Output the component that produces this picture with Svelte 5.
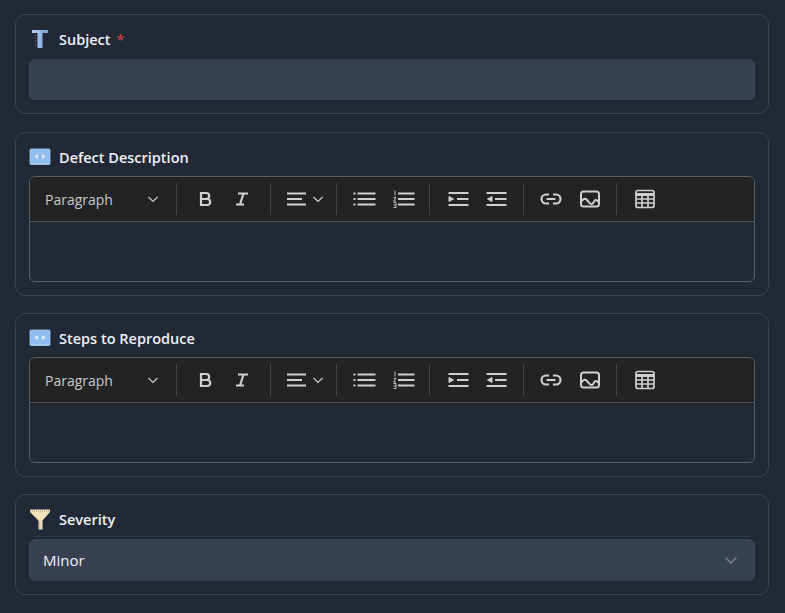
<script>
  const editors = ['Defect Description', 'Steps to Reproduce'];
</script>

{#snippet chev(w, cls)}
  <svg class={cls} width={w} height={w} viewBox="0 0 12 12" fill="none" stroke="currentColor" stroke-width="1.2"><path d="M1.5 4 6 8.5 10.5 4"/></svg>
{/snippet}

{#snippet toolbar()}
  <div class="toolbar">
    <div class="para"><span>Paragraph</span>{@render chev(12, 'pchev')}</div>
    <i class="sep"></i>
    <div class="grp g1">
      <svg width="20" height="20" viewBox="0 0 20 20" fill="none" stroke="#d0d0d0" stroke-width="2.200"><path d="M6 4h5.200a3 3 0 0 1 0 6H6zM6 10h6.200a3 3 0 0 1 0 6H6zM6 3v14"/></svg>
      <svg width="20" height="20" viewBox="0 0 20 20" fill="none" stroke="#d0d0d0" stroke-width="2.200"><path d="M6 4.500h10M4 15.500h8M11.500 4.500 8 15.500"/></svg>
    </div>
    <i class="sep"></i>
    <div class="grp g2">
      <svg width="20" height="20" viewBox="0 0 20 20" fill="none" stroke="#d0d0d0" stroke-width="2"><path d="M0 4.500h19M0 10h15M0 15.500h19"/></svg>
      {@render chev(12, 'achev')}
    </div>
    <i class="sep"></i>
    <div class="grp g3">
      <svg width="24" height="20" viewBox="0 0 24 20" fill="none" stroke="#d0d0d0" stroke-width="2"><path d="M4.500 4.500h18M4.500 10h18M4.500 15.500h18"/><path d="M.5 4.500h2M.5 10h2M.5 15.500h2"/></svg>
      <svg width="24" height="20" viewBox="0 0 24 20" fill="none" stroke="#d0d0d0" stroke-width="2"><path d="M6 4.500h16.500M6 10h16.500M6 15.500h16.500"/><path d="M3 1.500v5M1.500 8.500h2.500l-2.500 3.500h2.500M1.500 13.500h2.500v5h-2.500M1.500 16h2.500" stroke-width=".9"/></svg>
    </div>
    <i class="sep"></i>
    <div class="grp g4">
      <svg width="21" height="20" viewBox="0 0 21 20" fill="none" stroke="#d0d0d0" stroke-width="2"><path d="M.5 4h20M9 10h11.500M.5 16h20"/><path d="M1 7.500 5.500 10 1 12.500z" fill="#d0d0d0" stroke-width="1"/></svg>
      <svg width="21" height="20" viewBox="0 0 21 20" fill="none" stroke="#d0d0d0" stroke-width="2"><path d="M.5 4h20M9 10h11.500M.5 16h20"/><path d="M6 7.500 1.500 10 6 12.500z" fill="#d0d0d0" stroke-width="1"/></svg>
    </div>
    <i class="sep"></i>
    <div class="grp g5">
      <svg width="22" height="20" viewBox="0 0 22 20" fill="none" stroke="#d0d0d0" stroke-width="2.200"><path d="M9 5.500H6a4.500 4.500 0 0 0 0 9h3M13 5.500h3a4.500 4.500 0 0 1 0 9h-3M6.500 10h9"/></svg>
      <svg width="20" height="20" viewBox="0 0 20 20" fill="none" stroke="#d0d0d0" stroke-width="2"><rect x="1" y="2.500" width="18" height="15" rx="2.500"/><path d="M1 13c2-3.500 4-4 6-2s3 4.500 5 4 2-4 3.500-4 2.500 1 3.500 2"/></svg>
    </div>
    <i class="sep"></i>
    <svg class="tbl" width="20" height="20" viewBox="0 0 20 20" fill="none" stroke="#d0d0d0" stroke-width="1.700"><rect x="1" y="1.500" width="18" height="17" rx="2"/><path d="M1 5.500h18" stroke-width="3"/><path d="M1 10h18M1 14h18M7 7v11M13 7v11"/></svg>
  </div>
{/snippet}

<main class="page">
  <section class="card">
    <div class="label">
      <svg class="ic" width="22" height="22" viewBox="0 0 22 22"><defs><linearGradient id="tg" x1="0" x2="1"><stop offset="0" stop-color="#b6cff2"/><stop offset="1" stop-color="#7f9fd0"/></linearGradient></defs><path d="M3 2h16v3h-5.500v15h-5V5H3z" fill="url(#tg)"/><path d="M6.500 7v12" stroke="#7f8fae" stroke-width="1" stroke-dasharray="1 1.500" opacity=".7"/></svg>
      <span>Subject</span><b class="req">*</b>
    </div>
    <div class="input"></div>
  </section>

  {#each editors as title}
    <section class="card ed">
      <div class="label tight">
        <svg class="ic" width="22" height="22" viewBox="0 0 22 22"><rect x="1" y="3" width="20" height="15.500" rx="1" fill="#8fbdf0" stroke="#a9cdf5" stroke-width=".8"/><path d="M9 8v5l-3.500-2.500zM13 8v5l3.500-2.500z" fill="#e6eef8"/><path d="M3 17.500h16" stroke="#cfe0f5" stroke-width="1" stroke-dasharray="1 1"/></svg>
        <span>{title}</span>
      </div>
      <div class="editor">
        {@render toolbar()}
        <div class="area"></div>
      </div>
    </section>
  {/each}

  <section class="card">
    <div class="label ruled">
      <svg class="ic" width="22" height="22" viewBox="0 0 22 22"><path d="M1 1.500h20v2.500l-7.500 8.500v9h-4v-9L1 4z" fill="#f2e3bd"/><path d="M1 3h20" stroke="#9a8f7c" stroke-width="1" stroke-dasharray="1 1"/><path d="M10 13v8h1.500v-8z" fill="#c9c2b4"/></svg>
      <span>Severity</span>
    </div>
    <div class="rule"></div>
    <div class="input select"><span>Minor</span>{@render chev(14, 'schev')}</div>
  </section>
</main>

<style>
  :global(body) { margin: 0; background: #212936; }
  .page { display: flex; flex-direction: column; gap: 18px; padding: 14px 16px 18px 15px; font-family: "Open Sans", "Noto Sans", sans-serif; }
  .card { border: 1px solid #374151; border-radius: 10px; padding: 12px 13px 13px; }
  .ed { margin-bottom: -1px; }
  .label { display: flex; align-items: center; height: 24px; margin-bottom: 8px; color: #eef1f6; font-size: 14.5px; font-weight: 600; }
  .tight { margin-bottom: 7px; }
  .ruled { margin-bottom: 5px; }
  .rule { height: 1px; margin: 0 5px 2px; background: #2b3850; }
  .ic { margin-right: 8px; flex: none; margin-top: -1px; }
  .req { color: #c2413f; margin-left: 6px; font-weight: 600; }
  .input { height: 41px; background: #374151; border-radius: 6px; }
  .select { height: 42px; display: flex; align-items: center; justify-content: space-between; padding: 0 17px 0 14px; color: #eef1f6; font-size: 15px; }
  .select :global(.schev) { color: #7f8794; }
  .editor { border: 1px solid #5a6068; border-radius: 6px; overflow: hidden; }
  .toolbar { display: flex; align-items: center; height: 44px; background: #232323; border-bottom: 1px solid #4a4f57; color: #cfcfcf; }
  .para { display: flex; align-items: center; justify-content: space-between; width: 146px; padding-left: 15px; padding-right: 17px; font-size: 14px; color: #c9c9c9; box-sizing: border-box; flex: none; }
  .para span { line-height: 1; padding-top: 2px; }
  .sep { width: 1px; height: 32px; background: #444; flex: none; }
  .grp { display: flex; align-items: center; flex: none; }
  .g1 { gap: 17px; padding: 0 18px; }
  .g2 { gap: 5px; padding: 0 12px 0 16px; }
  .g3 { gap: 15px; padding: 0 13px 0 16px; }
  .g4 { gap: 17px; padding: 0 16px 0 18px; }
  .g5 { gap: 18px; padding: 0 16px; }
  .tbl { margin-left: 18px; }
  .area { height: 59px; background: #212936; }
</style>
